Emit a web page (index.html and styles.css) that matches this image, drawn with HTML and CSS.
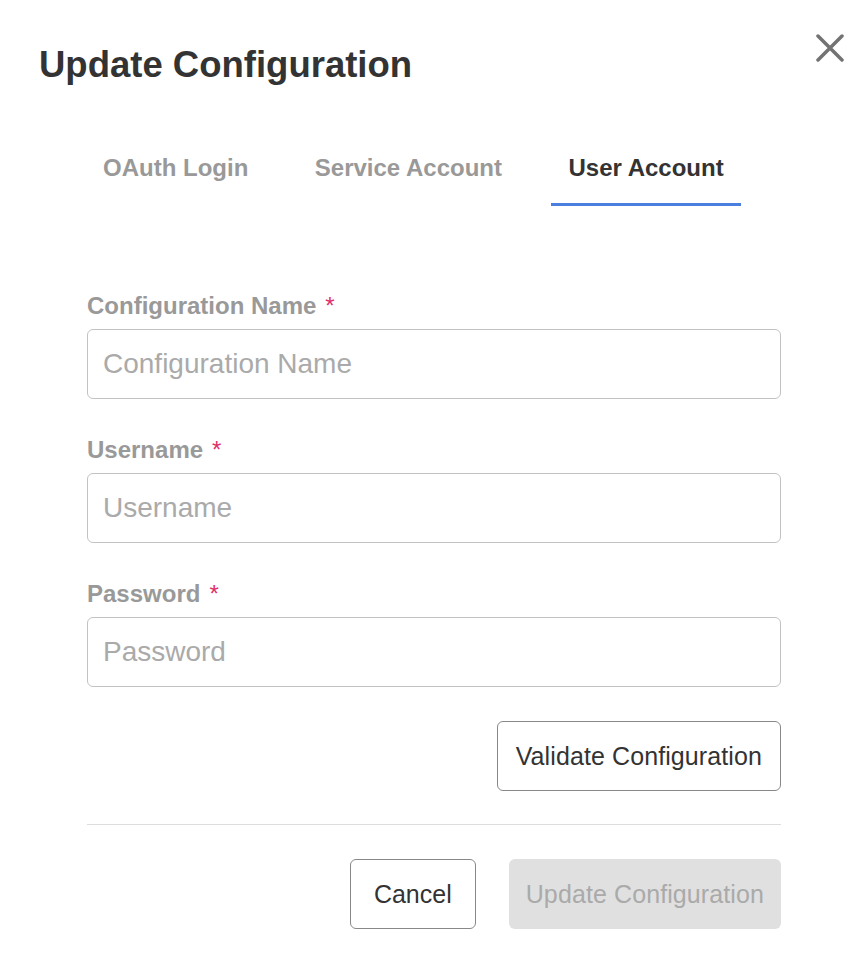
FILE: index.html
```html
<!DOCTYPE html>
<html lang="en">
<head>
<meta charset="utf-8">
<title>Update Configuration</title>
<link rel="stylesheet" href="styles.css">
</head>
<body>
<div class="dialog">
  <div class="header">
    <h1 class="title">Update Configuration</h1>
    <button class="close" aria-label="Close">
      <svg width="28" height="28" viewBox="0 0 28 28"><path d="M2 2 L26 26 M26 2 L2 26" stroke="#737373" stroke-width="3.5" stroke-linecap="round"/></svg>
    </button>
  </div>
  <div class="tabs">
    <div class="tab">OAuth Login</div>
    <div class="tab">Service Account</div>
    <div class="tab active">User Account</div>
  </div>
  <form class="form">
    <div class="field">
      <label class="label">Configuration Name<span class="req">*</span></label>
      <input class="input" type="text" placeholder="Configuration Name">
    </div>
    <div class="field">
      <label class="label">Username<span class="req">*</span></label>
      <input class="input" type="text" placeholder="Username">
    </div>
    <div class="field">
      <label class="label">Password<span class="req">*</span></label>
      <input class="input" type="password" placeholder="Password">
    </div>
    <div class="validate-row">
      <button type="button" class="btn btn-outline validate">Validate Configuration</button>
    </div>
    <div class="divider"></div>
    <div class="actions">
      <button type="button" class="btn btn-outline cancel">Cancel</button>
      <button type="button" class="btn btn-disabled update" disabled>Update Configuration</button>
    </div>
  </form>
</div>
</body>
</html>
```

FILE: styles.css
```css
* { box-sizing: border-box; }
body {
  margin: 0;
  background: #fff;
  font-family: "Liberation Sans", Arial, Helvetica, sans-serif;
  color: #333;
}
.dialog {
  width: 862px;
  padding-top: 43px;
}
.header {
  display: flex;
  align-items: flex-start;
  justify-content: space-between;
  padding-left: 39px;
  padding-right: 18px;
}
.title {
  margin: 0;
  font-size: 36.5px;
  line-height: 44px;
  font-weight: 700;
  color: #333;
}
.close {
  margin-top: -9px;
  padding: 0;
  border: 0;
  background: none;
  width: 28px;
  height: 28px;
  display: flex;
  cursor: pointer;
}
.tabs {
  display: flex;
  gap: 32.5px;
  margin-left: 86px;
  margin-top: 67px;
}
.tab {
  padding: 0 17px 21px;
  font-size: 24px;
  line-height: 28px;
  font-weight: 700;
  color: #999;
  border-bottom: 3px solid transparent;
}
.tab.active {
  color: #333;
  border-bottom-color: #4a7fe0;
}
.form {
  margin: 86px 81px 0 87px;
  display: flex;
  flex-direction: column;
}
.field {
  display: flex;
  flex-direction: column;
  margin-bottom: 37px;
}
.field:nth-child(3) { margin-bottom: 34px; }
.label {
  font-size: 24px;
  line-height: 28px;
  font-weight: 700;
  color: #999;
  margin-bottom: 9px;
}
.req {
  color: #e0306a;
  margin-left: 9px;
  font-weight: 400;
}
.input {
  height: 70px;
  border: 1px solid #c2c2c2;
  border-radius: 6px;
  padding: 0 15px;
  font-family: inherit;
  font-size: 28px;
  color: #333;
  outline: none;
}
.input::placeholder { color: #aaa; }
.validate-row {
  display: flex;
  justify-content: flex-end;
}
.btn {
  height: 70px;
  border-radius: 6px;
  font-family: inherit;
  font-size: 25px;
  background: #fff;
}
.btn-outline {
  border: 1px solid #888;
  color: #333;
}
.validate { padding: 0 18px; letter-spacing: 0.1px; }
.divider {
  height: 1px;
  background: #ddd;
  margin-top: 33px;
}
.actions {
  display: flex;
  justify-content: flex-end;
  gap: 33px;
  margin-top: 34px;
}
.cancel { padding: 0 23px; }
.btn-disabled {
  border: 0;
  background: #e0e0e0;
  color: #aaa;
  padding: 0 17px;
  letter-spacing: 0.1px;
}
```
